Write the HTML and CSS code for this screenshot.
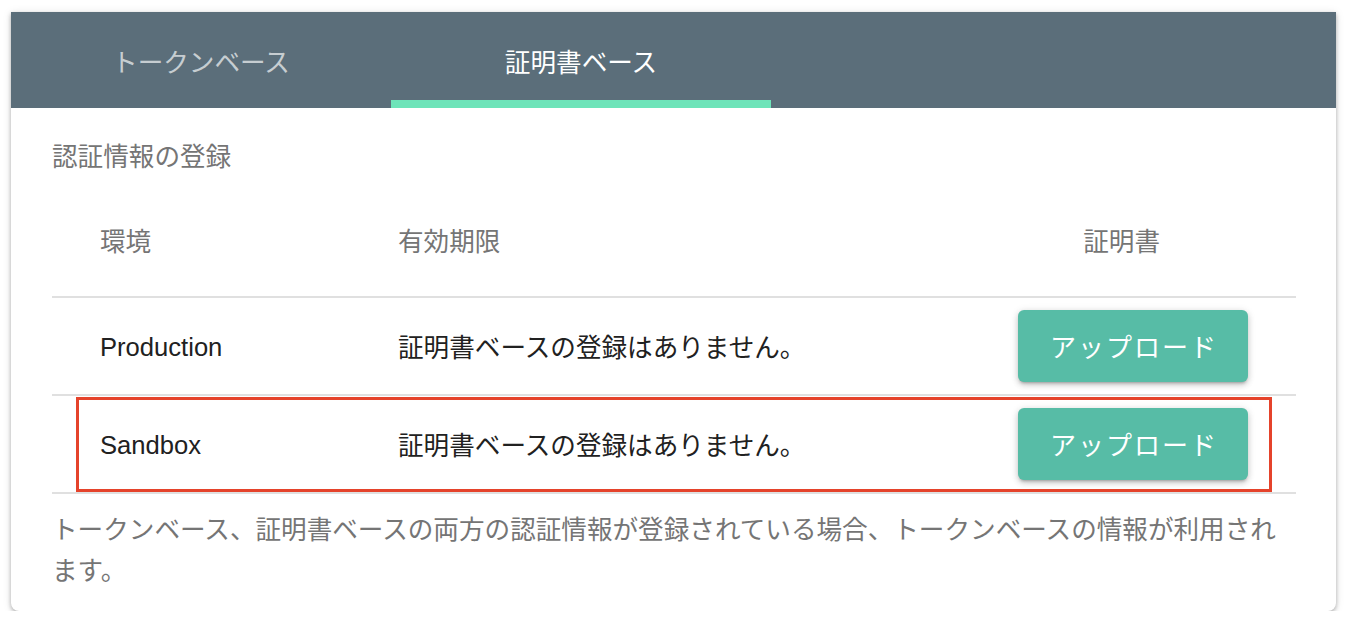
FILE: index.html
```html
<!DOCTYPE html>
<html lang="ja">
<head>
<meta charset="utf-8">
<title>認証情報の登録</title>
<link rel="stylesheet" href="styles.css">
</head>
<body>
<div class="page">
  <div class="card">
    <div class="tabs">
      <div class="tab">トークンベース</div>
      <div class="tab active">証明書ベース</div>
    </div>
    <div class="body">
      <div class="subtitle">認証情報の登録</div>
      <div class="table">
        <div class="row head">
          <div class="cell c1">環境</div>
          <div class="cell c2">有効期限</div>
          <div class="cell c3">証明書</div>
        </div>
        <div class="row">
          <div class="cell c1">Production</div>
          <div class="cell c2">証明書ベースの登録はありません。</div>
          <div class="cell c3"><button class="btn">アップロード</button></div>
        </div>
        <div class="row highlight">
          <div class="cell c1">Sandbox</div>
          <div class="cell c2">証明書ベースの登録はありません。</div>
          <div class="cell c3"><button class="btn">アップロード</button></div>
          <div class="mark"></div>
        </div>
      </div>
      <p class="note">トークンベース、証明書ベースの両方の認証情報が登録されている場合、トークンベースの情報が利用されます。</p>
    </div>
  </div>
</div>
</body>
</html>
```
FILE: styles.css
```css
html, body {
  margin: 0;
  padding: 0;
  background: #ffffff;
}
body {
  font-family: "Liberation Sans", "Noto Sans CJK JP", sans-serif;
  font-size: 25.6px;
  color: #212121;
}
.page {
  padding: 12px 12px 0 11px;
}
.card {
  background: #fff;
  border-radius: 0 0 8px 8px;
  box-shadow: 0 2px 4px rgba(0,0,0,0.28), 0 1px 10px rgba(0,0,0,0.1);
  overflow: hidden;
}
.tabs {
  display: flex;
  height: 96px;
  background: #5b6e7a;
}
.tab {
  width: 380px;
  display: flex;
  align-items: center;
  justify-content: center;
  color: rgba(255,255,255,0.68);
  font-size: 25.6px;
  box-sizing: border-box;
}
.tab.active {
  color: #ffffff;
  border-bottom: 8px solid #6ee4b9;
  padding-top: 8px;
}
.body {
  padding: 30px 40px 19px 41px;
}
.subtitle {
  color: #757575;
  line-height: 38px;
  height: 38px;
}
.row {
  display: grid;
  grid-template-columns: 298px 1fr auto;
  align-items: center;
  height: 96px;
  border-bottom: 2px solid #e0e0e0;
  position: relative;
}
.row.head {
  height: 122px;
  padding-top: 6px;
  box-sizing: border-box;
  color: #757575;
}
.cell {
  padding-left: 48px;
  white-space: nowrap;
}
.row:not(.head) .c1 {
  padding-top: 2px;
}
.c2 {
  padding-bottom: 2px;
}
.head .c2 {
  padding-bottom: 0;
}
.c3 {
  padding-left: 0;
  padding-right: 48px;
  text-align: right;
}
.head .c3 {
  padding-right: 136px;
}
.btn {
  width: 230px;
  height: 72px;
  border: none;
  border-radius: 6px;
  background: #57bca6;
  color: #fff;
  font-family: "Liberation Sans", "Noto Sans CJK JP", sans-serif;
  font-size: 26px;
  letter-spacing: 2px;
  padding: 0 0 2px 2px;
  box-shadow: 0 3px 3px -2px rgba(0,0,0,0.25), 0 3px 6px 0 rgba(0,0,0,0.16), 0 1px 9px 0 rgba(0,0,0,0.1);
  display: block;
  margin-left: auto;
}
.mark {
  position: absolute;
  left: 24px;
  right: 24px;
  top: 1px;
  bottom: 0;
  border: 3px solid #e5432b;
  pointer-events: none;
}
.note {
  margin: 16px 0 0 0;
  color: #757575;
  line-height: 41px;
}
```
